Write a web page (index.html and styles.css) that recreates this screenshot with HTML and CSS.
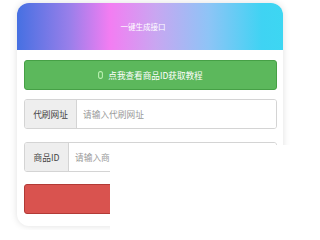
FILE: index.html
```html
<!DOCTYPE html>
<html lang="zh">
<head>
<meta charset="utf-8">
<link rel="stylesheet" href="styles.css">
</head>
<body>
<div class="card">
  <div class="card-head">一键生成接口</div>
  <div class="card-body">
    <div class="btn btn-green">
      <svg class="ico" width="5" height="8" viewBox="0 0 5 8"><rect x="0.6" y="0.6" width="3.8" height="6.8" rx="1.6" fill="none" stroke="#b9f0b0" stroke-width="1.1"/></svg>
      <span>点我查看商品ID获取教程</span>
    </div>
    <div class="igroup gap1">
      <span class="addon addon-a">代刷网址</span>
      <span class="field">请输入代刷网址</span>
    </div>
    <div class="igroup gap2">
      <span class="addon addon-b">商品ID</span>
      <span class="field">请输入商品ID</span>
    </div>
    <div class="btn btn-red"></div>
  </div>
</div>
<div class="cover"></div>
</body>
</html>
```
FILE: styles.css
```css
html, body {
  margin: 0;
  padding: 0;
  background: #fff;
  width: 300px;
  height: 230px;
  overflow: hidden;
  font-family: "Noto Sans CJK SC", "Noto Sans", sans-serif;
}
.card {
  margin: 3px 17px 0 17px;
  border-radius: 12px;
  background: #fff;
  box-shadow: 0 0 7px rgba(0,0,0,0.13);
  overflow: hidden;
}
.card-head {
  height: 47px;
  display: flex;
  align-items: center;
  justify-content: center;
  padding-right: 14px;
  color: #fff;
  font-size: 7.5px;
  background: linear-gradient(90deg, #4670e2 0%, #9a7fea 20%, #f37df2 35%, #c9a6f1 52%, #8ec4f6 72%, #3fd3f3 92%, #3dd6f2 100%);
}
.card-body {
  padding: 10px 6px 12px 7px;
}
.btn {
  height: 30px;
  box-sizing: border-box;
  border-radius: 3px;
}
.btn-green {
  background: #5cb85c;
  border: 1px solid #46a046;
  color: #fff;
  font-size: 8.6px;
  display: flex;
  align-items: center;
  justify-content: center;
  gap: 5px;
  margin-bottom: 9px;
}
.ico { display: block; }
.igroup {
  height: 30px;
  box-sizing: border-box;
  display: flex;
  border: 1px solid #d4d4d4;
  border-radius: 3px;
  overflow: hidden;
  font-size: 8.7px;
}
.gap1 { margin-bottom: 13px; }
.gap2 { margin-bottom: 12px; }
.addon {
  background: #eeeeee;
  color: #444;
  border-right: 1px solid #d4d4d4;
  display: flex;
  align-items: center;
  justify-content: center;
  flex: none;
}
.addon-a { width: 51px; }
.addon-b { width: 43px; }
.field {
  flex: 1;
  display: flex;
  align-items: center;
  padding-left: 6px;
  color: #999;
  background: #fff;
}
.btn-red {
  background: #d9534f;
  border: 1px solid #b23a36;
}
.cover {
  position: absolute;
  left: 110px;
  top: 145px;
  right: 0;
  bottom: 0;
  background: #fff;
}
```
